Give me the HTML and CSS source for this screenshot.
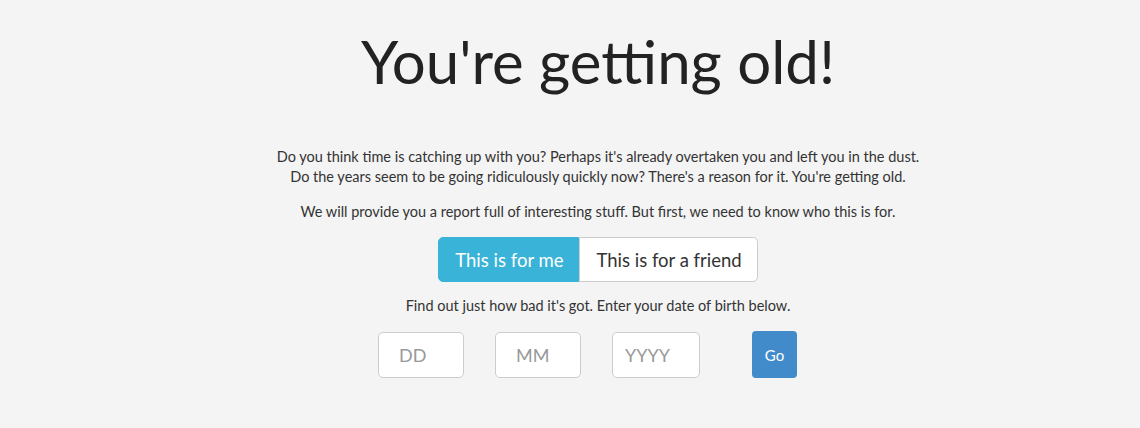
FILE: index.html
```html
<!DOCTYPE html>
<html lang="en">
<head>
  <meta charset="UTF-8" />
  <title>You're getting old!</title>
  <link rel="stylesheet" href="styles.css">
</head>
<body>

  <div class="container">
    <h1>You're getting old!</h1>

    <p class="intro">
      Do you think time is catching up with you? Perhaps it's already overtaken you and left you in the dust.<br>
      Do the years seem to be going ridiculously quickly now? There's a reason for it. You're getting old.
    </p>

    <p>We will provide you a report full of interesting stuff. But first, we need to know who this is for.</p>

    <div class="btn-group">
      <button type="button" class="choice active">This is for me</button>
      <button type="button" class="choice">This is for a friend</button>
    </div>

    <p>Find out just how bad it's got. Enter your date of birth below.</p>

    <form class="dob-form">
      <input type="text" placeholder="DD">
      <input type="text" placeholder="MM">
      <input type="text" class="year" placeholder="YYYY">
      <button type="submit" class="go">Go</button>
    </form>
  </div>

</body>
</html>
```

FILE: styles.css
```css
body {
  margin: 0;
  background-color: #f4f4f4;
  color: #333;
  font-family: Lato, 'Open Sans', sans-serif;
  font-size: 14.5px;
  line-height: 20px;
}

.container {
  width: 760px;
  margin: 0 auto;
  padding-left: 56px;
  text-align: center;
}

h1 {
  margin: 24px 0 49px;
  font-size: 60px;
  line-height: 74px;
  font-weight: 400;
  color: #222;
}

p {
  margin: 0 0 10px;
}

.intro {
  margin-bottom: 15px;
}

.btn-group {
  display: inline-flex;
  margin: 5px 0 14px;
}

.choice {
  height: 45px;
  padding: 0 15px 0 16px;
  border: 1px solid #ccc;
  background: #fff;
  color: #333;
  font-family: inherit;
  font-size: 18.5px;
  border-radius: 0 5px 5px 0;
}

.choice.active {
  background-color: #39b3d7;
  border-color: #39b3d7;
  color: #fff;
  border-radius: 5px 0 0 5px;
}

.dob-form {
  display: flex;
  justify-content: center;
  align-items: center;
  margin-top: 15px;
  padding-right: 21px;
}

.dob-form input {
  width: 86px;
  height: 46px;
  box-sizing: border-box;
  margin-right: 31px;
  padding: 0 20px;
  border: 1px solid #ccc;
  border-radius: 5px;
  background: #fff;
  font-family: inherit;
  font-size: 18px;
}

.dob-form input::placeholder {
  color: #999;
}

.dob-form .year {
  width: 88px;
  padding: 0 12px;
  margin-right: 52px;
}

.go {
  width: 45px;
  height: 47px;
  border: none;
  border-radius: 4px;
  background-color: #428bca;
  color: #fff;
  font-family: inherit;
  font-size: 15px;
}
```
